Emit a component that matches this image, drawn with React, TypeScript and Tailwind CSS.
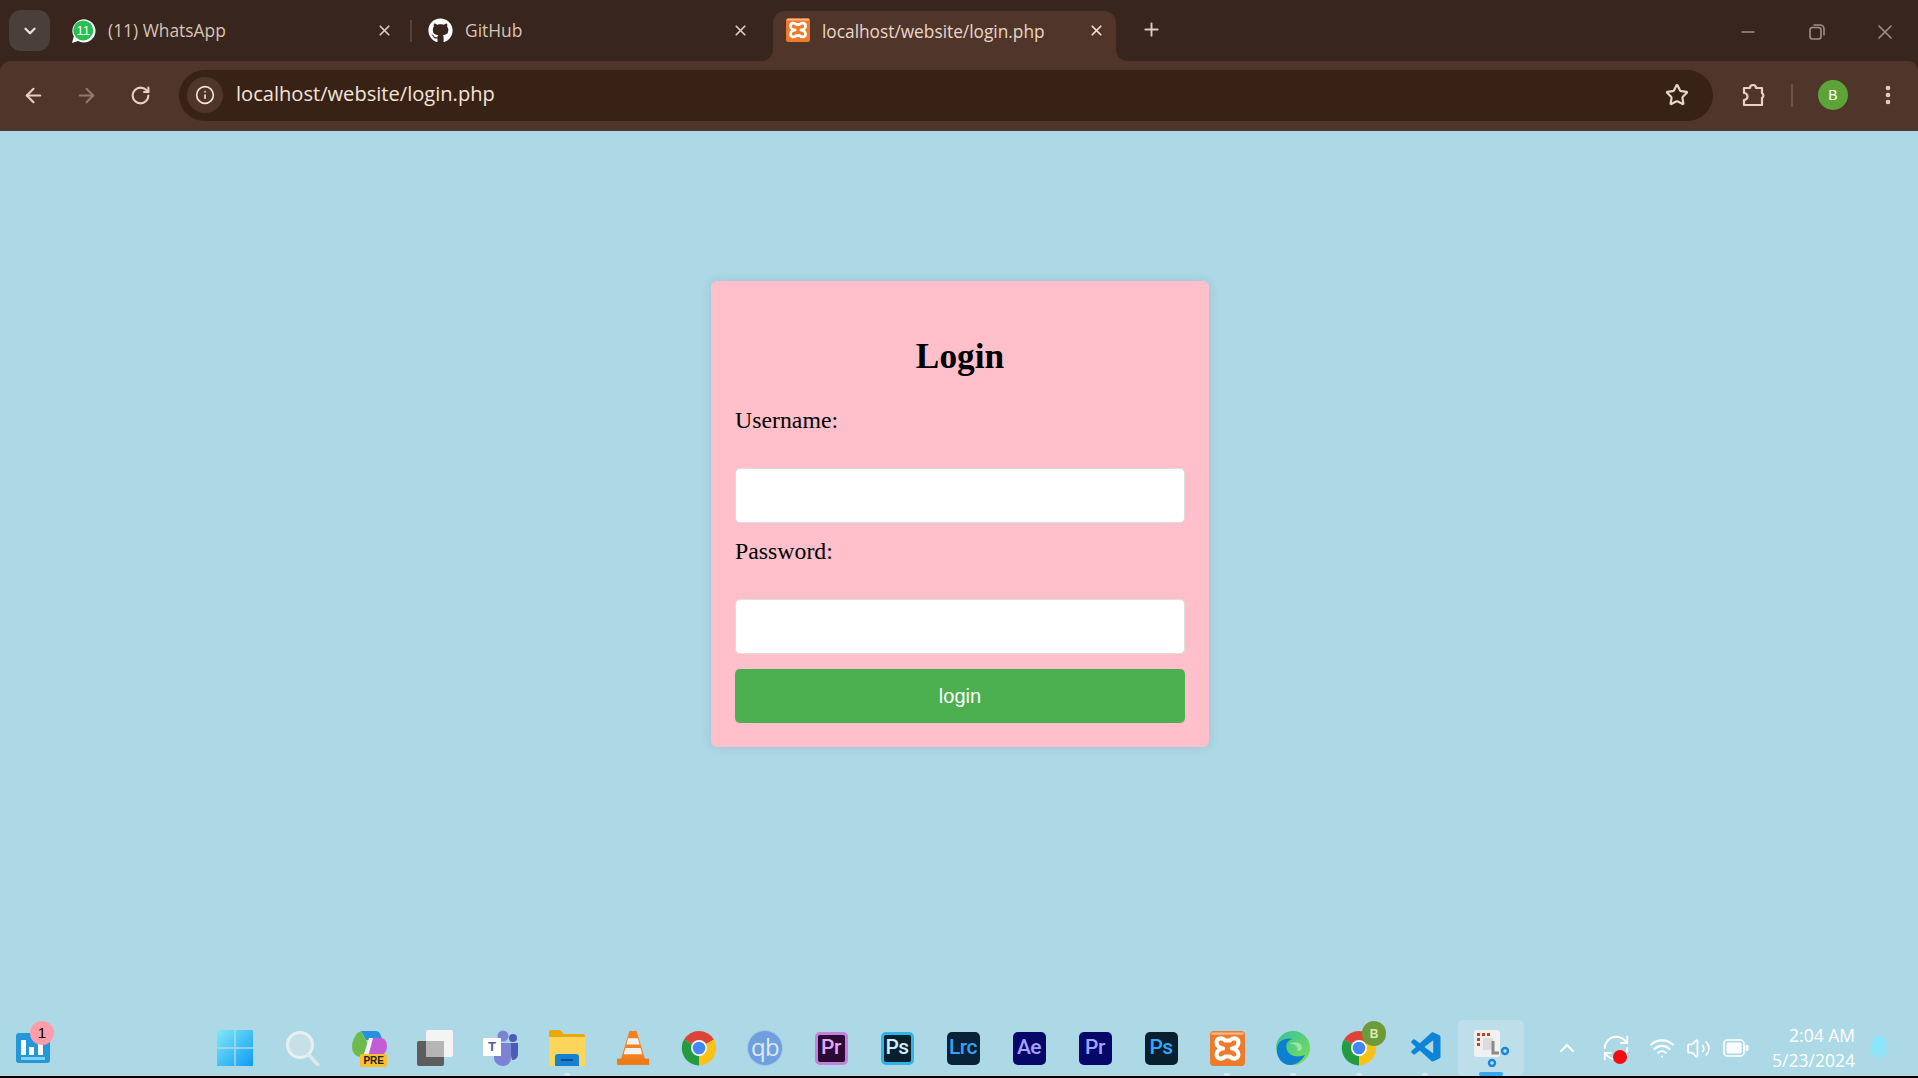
import {
  X, Plus, ArrowLeft, ArrowRight, RotateCw, RefreshCw, Info, Star, EllipsisVertical, Minus, ChevronDown, ChevronUp, Wifi, Volume2,
} from 'lucide-react'
import { FaGithub } from 'react-icons/fa'
import { VscVscode } from 'react-icons/vsc'
import type { ReactNode } from 'react'

const uiFont = 'font-["Open_Sans","Noto_Sans",sans-serif]'

function WhatsAppIcon() {
  return (
    <svg width="26" height="26" viewBox="0 0 26 26">
      <path d="M2 25l1.8-6.4A11.6 11.6 0 1 1 8 22.9z" fill="#fff" />
      <circle cx="13.2" cy="12.4" r="10" fill="#25c04f" />
      <text x="13.2" y="17" textAnchor="middle" fontSize="13" fill="#fff" fontFamily="Liberation Sans">11</text>
    </svg>
  )
}

function XamppBadge({ size }: { size: number }) {
  return (
    <svg width={size} height={size} viewBox="0 0 24 24" className="shrink-0">
      <rect width="24" height="24" rx="2.500" fill="#ee7a2c" />
      <rect x="1" y="1" width="22" height="1.500" fill="#f6b88d" />
      <path
        d="M10.500 6.500C8 4 4.500 5 4.500 8c0 2.500 2.500 4 4.500 4-2 0-4.500 1.500-4.500 4 0 3 3.500 4 6 1.500h3c2.500 2.500 6 1.500 6-1.500 0-2.500-2.500-4-4.500-4 2 0 4.500-1.500 4.500-4 0-3-3.500-4-6-1.500z"
        fill="none"
        stroke="#fff"
        strokeWidth="2.800"
        strokeLinejoin="round"
      />
    </svg>
  )
}

function Tab({ title, icon, width, pad, gap, closeGap, sep }: { title: string; icon: ReactNode; width: string; pad: string; gap: string; closeGap: string; sep?: boolean }) {
  return (
    <div className={`flex h-[41px] shrink-0 items-center text-[17.4px] text-[#d9c3b5] ${width} ${pad}`}>
      <div className="flex w-[26px] justify-center">{icon}</div>
      <span className={gap}>{title}</span>
      <X size={17} strokeWidth={2.4} className={`ml-auto text-[#e0cabc] ${closeGap}`} />
      {sep && <div className="h-[22px] w-[2px] bg-[#56423a]" />}
    </div>
  )
}

function TabStrip() {
  return (
    <div className="flex h-[61px] items-start pl-[9px] pt-[10px]">
      <div className="flex h-[41px] w-[41px] items-center justify-center rounded-[12px] bg-[#4b3f3b]">
        <ChevronDown size={18} strokeWidth={3} className="text-[#f0e0d6]" />
      </div>
      <div className="ml-[13px] flex">
        <Tab title="(11) WhatsApp" icon={<WhatsAppIcon />} width="w-[349px]" pad="pl-[7px]" gap="ml-[12px]" closeGap="mr-[17px]" sep />
        <Tab title="GitHub" icon={<FaGithub size={25} className="text-white" />} width="w-[361px]" pad="pl-[15px]" gap="ml-[12px]" closeGap="mr-[24px]" />
      </div>
      <div className="relative z-10 mt-[1px] flex h-[50px] w-[343px] items-start rounded-t-[12px] bg-[#50362a] pl-[13px] pt-[7px] text-[17.3px] text-[#ead6c9]">
        <svg width="12" height="12" viewBox="0 0 12 12" className="absolute bottom-0 left-[-12px]">
          <path d="M12 0v12H0c7 0 12-5 12-12z" fill="#50362a" />
        </svg>
        <svg width="12" height="12" viewBox="0 0 12 12" className="absolute bottom-0 right-[-12px]">
          <path d="M0 0v12h12C5 12 0 7 0 0z" fill="#50362a" />
        </svg>
        <XamppBadge size={24} />
        <span className="ml-[12px] mt-[1px]">localhost/website/login.php</span>
        <X size={17} strokeWidth={2.4} className="ml-auto mr-[11px] mt-[4px] text-[#f0dfd4]" />
      </div>
      <Plus size={21} strokeWidth={2.2} className="ml-[25px] mt-[9px] text-[#e0cabc]" />
      <div className="ml-auto flex items-center pt-[10px] text-[#a09087]">
        <Minus size={20} />
        <svg width="18" height="18" viewBox="0 0 18 18" className="ml-[50px]" fill="none" stroke="currentColor" strokeWidth="1.6">
          <rect x="2" y="4.5" width="11" height="11.5" rx="2.5" />
          <path d="M5.5 2h6.5a4 4 0 0 1 4 4v6.5" />
        </svg>
        <X size={24} strokeWidth={1.6} className="ml-[47px] mr-[21px]" />
      </div>
    </div>
  )
}

function Toolbar() {
  return (
    <div className="flex h-[70px] items-center rounded-t-[10px] border-b-2 border-[#463a33] bg-[#50362a] pl-[22px]">
      <ArrowLeft size={23} strokeWidth={2.2} className="text-[#e8cfc0]" />
      <ArrowRight size={23} strokeWidth={2.2} className="ml-[30px] text-[#907a6d]" />
      <RotateCw size={21} strokeWidth={2.4} className="ml-[32px] text-[#e8cfc0]" />
      <div className="ml-[28px] flex h-[51px] w-[1534px] items-center rounded-full bg-[#382215] pl-[8px]">
        <div className="flex h-[36px] w-[36px] items-center justify-center rounded-full bg-[#50362a]">
          <Info size={20} strokeWidth={2} className="text-[#f2e2d8]" />
        </div>
        <span className="mb-[2px] ml-[13px] text-[20.1px] text-[#f4e4da]">localhost/website/login.php</span>
        <Star size={24} strokeWidth={2.2} className="ml-auto mr-[24px] text-[#e8d5c9]" />
      </div>
      <svg width="26" height="26" viewBox="0 0 26 26" className="ml-[27px]" fill="none" stroke="#ecd1c0" strokeWidth="2.2" strokeLinejoin="round">
        <path d="M4 6h6a3 3 0 0 1 6 0h6v5a3 3 0 0 1 0 5v7H4v-5a3 3 0 0 0 0-7z" />
      </svg>
      <div className="ml-[25px] h-[23px] w-[2px] bg-[#6d5346]" />
      <div className="ml-[25px] flex h-[30px] w-[30px] items-center justify-center rounded-full bg-[#5da438] font-['Liberation_Sans',sans-serif] text-[14px] text-white">
        B
      </div>
      <EllipsisVertical size={24} strokeWidth={2.6} className="ml-[28px] text-[#ecd1c0]" />
    </div>
  )
}

function LoginCard() {
  return (
    <form className="ml-[2px] mt-[150px] h-[466px] w-[498px] rounded-[6px] bg-[#ffc0cb] px-[24px] pt-[56px] font-['Liberation_Serif',serif] text-black shadow-[0_0_12px_rgba(0,0,0,0.1)]">
      <h2 className="text-center text-[35.3px] font-bold leading-[40px]">Login</h2>
      <label className="mt-[29px] block text-[23.8px] leading-[28px]">Username:</label>
      <input type="text" className="mb-[14px] mt-[34px] block h-[55px] w-full rounded-[5px] border border-[#ddd] bg-white" />
      <label className="block text-[23.8px] leading-[28px]">Password:</label>
      <input type="password" className="mt-[34px] block h-[55px] w-full rounded-[5px] border border-[#ddd] bg-white" />
      <button type="button" className="mt-[15px] h-[54px] w-full rounded-[5px] bg-[#4caf50] font-['Liberation_Sans',sans-serif] text-[20px] text-white">
        login
      </button>
    </form>
  )
}

function AdobeIcon({ label, bg, fg, border }: { label: string; bg: string; fg: string; border?: string }) {
  return (
    <div
      className={`flex h-[33px] w-[33px] items-center justify-center rounded-[5px] font-['Roboto',sans-serif] text-[21px] font-medium tracking-tight ${border ? 'border-[3px]' : ''}`}
      style={{ background: bg, color: fg, borderColor: border }}
    >
      {label}
    </div>
  )
}

function ChromeIcon() {
  return (
    <svg width="36" height="36" viewBox="0 0 36 36">
      <path d="M18 18 3 9.5A17.5 17.5 0 0 1 33 9.5z" fill="#dd4437" />
      <path d="M18 18 33 9.5A17.5 17.5 0 0 1 18 35.500z" fill="#fbc116" />
      <path d="M18 18 18 35.500A17.500 17.500 0 0 1 3 9.500z" fill="#249a41" />
      <circle cx="18" cy="18" r="8" fill="#fff" />
      <circle cx="18" cy="18" r="6.300" fill="#4287f5" />
    </svg>
  )
}

function EdgeIcon() {
  return (
    <svg width="36" height="36" viewBox="0 0 36 36">
      <defs>
        <linearGradient id="edge-a" x1="0" y1="0" x2="1" y2="1">
          <stop offset="0" stopColor="#35c1a0" />
          <stop offset="1" stopColor="#7ee04f" />
        </linearGradient>
      </defs>
      <circle cx="18" cy="18" r="17" fill="url(#edge-a)" />
      <path d="M2 20C2 10 11 7 18 9c-6 1-8 6-6 11 2 6 10 8 18 5-4 7-10 10-15 10C7 35 2 28 2 20z" fill="#0c7fd0" />
      <path d="M14 14c5-3 13-2 13 4 0 2-2 3-5 3 3-4-4-8-8-7z" fill="#b3ecc7" opacity="0.7" />
    </svg>
  )
}

function SnipIcon() {
  return (
    <svg width="36" height="38" viewBox="0 0 36 38">
      <rect x="1" y="1" width="26" height="27" rx="3" fill="#f1f1f1" />
      <path d="M4 4h3v3H4zM9 4h3v3H9zM14 4h3v3h-3zM4 9h3v3H4zM4 14h3v3H4z" fill="#c8401f" />
      <path d="M10 9h10v12H10z" fill="#dcdcdc" />
      <path d="M20 12v12l6 0" fill="none" stroke="#8a8a8a" strokeWidth="3" />
      <circle cx="32" cy="22" r="3" fill="none" stroke="#1a86d8" strokeWidth="2.400" />
      <circle cx="19" cy="34" r="3" fill="none" stroke="#1a86d8" strokeWidth="2.400" />
    </svg>
  )
}

const taskbarApps: ReactNode[] = [
  <svg key="start" width="36" height="36" viewBox="0 0 36 36" className="-ml-[4px]">
    <defs>
      <linearGradient id="win" x1="0" y1="0" x2="1" y2="1">
        <stop offset="0" stopColor="#7fe9f7" />
        <stop offset="1" stopColor="#0f9bf5" />
      </linearGradient>
    </defs>
    <path d="M0 0h17.300v17.300H0zM18.700 0H36v17.300H18.700zM0 18.700h17.300V36H0zM18.700 18.700H36V36H18.700z" fill="url(#win)" />
  </svg>,
  <svg key="search" width="36" height="36" viewBox="0 0 36 36" fill="none">
    <circle cx="15" cy="15" r="12.500" fill="#c6e0e8" stroke="#e9eff0" strokeWidth="3" />
    <path d="M24 25l9 10" stroke="#dfe8ea" strokeWidth="3.500" strokeLinecap="round" />
  </svg>,
  <div key="copilot" className="relative h-[38px] w-[36px]">
    <svg width="36" height="32" viewBox="0 0 36 32">
      <path d="M10 2h15c3 0 5 3 6 9H15z" fill="#2a8fe0" />
      <path d="M10 2c-5 2-9 9-9 16 0 6 4 10 10 10h6l2-8 -4-9z" fill="#6dba4d" />
      <path d="M21 9h10c3 1 5 4 5 8 0 6-4 11-11 11h-9z" fill="#c45cd6" />
      <path d="M18 9h4l-5 19h-5z" fill="#f1f4f5" />
    </svg>
    <div className="absolute bottom-0 right-0 rounded-[2px] bg-[#fbc02d] px-[3px] font-['Liberation_Sans',sans-serif] text-[10px] font-bold leading-[13px] text-[#222]">
      PRE
    </div>
  </div>,
  <svg key="view" width="36" height="36" viewBox="0 0 36 36">
    <rect x="9" y="0" width="27" height="27" rx="2" fill="#f4f4f4" />
    <rect x="0" y="11" width="27" height="25" rx="2" fill="#5d5d5d" />
    <rect x="9" y="11" width="18" height="16" fill="#b5b5b5" />
  </svg>,
  <div key="teams" className="relative h-[36px] w-[36px]">
    <svg width="36" height="36" viewBox="0 0 36 36">
      <circle cx="20" cy="6" r="5.500" fill="#7b83d3" />
      <circle cx="30" cy="8" r="4" fill="#4e5ab5" />
      <path d="M25 13h10v11c0 4-3 6-6 6z" fill="#4e5ab5" />
      <path d="M11 13h17v15c0 5-4 8-8 8s-9-3-9-8z" fill="#7b83d3" />
    </svg>
    <div className="absolute left-0 top-[8px] flex h-[18px] w-[18px] items-center justify-center bg-white font-['Liberation_Sans',sans-serif] text-[13px] font-bold text-[#4e5ab5]">
      T
    </div>
  </div>,
  <svg key="files" width="36" height="38" viewBox="0 0 36 38">
    <path d="M0 3a2 2 0 0 1 2-2h9l4 4h19a2 2 0 0 1 2 2v6H0z" fill="#e8a90f" />
    <path d="M0 8h36v29H0z" fill="#fcd65b" />
    <path d="M6 37V28a3 3 0 0 1 3-3h18a3 3 0 0 1 3 3v9z" fill="#1681d2" />
    <path d="M12 31h12" stroke="#0a4d8a" strokeWidth="2" />
  </svg>,
  <svg key="vlc" width="32" height="36" viewBox="0 0 36 38">
    <path d="M14 0h8l10 33H4z" fill="#f47f1f" />
    <path d="M12.500 8h11l2 7h-15zM9.500 19h17l2 7h-21z" fill="#f2f2f2" />
    <path d="M0 31h36v7H0z" fill="#ee7a15" />
  </svg>,
  <ChromeIcon key="chrome" />,
  <div key="qb" className="flex h-[36px] w-[36px] items-center justify-center rounded-full border border-[#a9c6ea] bg-[#6f9fdc] pb-[3px] font-['Open_Sans',sans-serif] text-[24px] leading-none tracking-tight text-[#dcebf8]">
    qb
  </div>,
  <AdobeIcon key="pr1" label="Pr" bg="#2d0a33" fg="#e4a6f5" border="#c77fdc" />,
  <AdobeIcon key="ps1" label="Ps" bg="#08202e" fg="#cfeefc" border="#30b4e6" />,
  <AdobeIcon key="lrc" label="Lrc" bg="#0a2238" fg="#3aa0f0" />,
  <AdobeIcon key="ae" label="Ae" bg="#07076a" fg="#a2a2fb" />,
  <AdobeIcon key="pr2" label="Pr" bg="#07076a" fg="#a2a2fb" />,
  <AdobeIcon key="ps2" label="Ps" bg="#08202e" fg="#31a8ff" />,
  <XamppBadge key="xampp" size={35} />,
  <EdgeIcon key="edge" />,
  <div key="chrome2" className="relative">
    <ChromeIcon />
    <div className="absolute right-[-9px] top-[-9px] flex h-[25px] w-[24px] items-center justify-center rounded-full bg-[#6e9b3a] font-['Liberation_Sans',sans-serif] text-[12px] font-bold text-[#dcecb8]">
      B
    </div>
  </div>,
  <VscVscode key="code" size={36} className="ml-[3px] text-[#0d84d8]" />,
  <SnipIcon key="snip" />,
]

const underlined = new Set(['files', 'xampp', 'edge', 'chrome2', 'code'])

function Taskbar() {
  return (
    <div className="flex h-[68px] shrink-0 items-center border-b-2 border-black pl-[16px] pt-[10px]">
      <div className="relative h-[30px] w-[34px] rounded-[3px] bg-[#2596d8]">
        <div className="absolute bottom-[8px] left-[5px] h-[15px] w-[5px] bg-white" />
        <div className="absolute bottom-[8px] left-[13px] h-[8px] w-[5px] bg-white" />
        <div className="absolute bottom-[8px] left-[22px] h-[11px] w-[5px] bg-white" />
        <div className="absolute bottom-[3px] left-[5px] h-[3px] w-[24px] bg-[#7cd4f5]" />
        <div className="absolute right-[-4px] top-[-12px] flex h-[24px] w-[24px] items-center justify-center rounded-full bg-[#ff9ea8] font-['Liberation_Sans',sans-serif] text-[15px] text-black">
          1
        </div>
      </div>
      <div className="ml-[154px] flex">
        {taskbarApps.map((icon, i) => {
          const key = (icon as { key?: string }).key ?? String(i)
          const active = key === 'snip'
          return (
            <div key={key} className={`relative flex h-[56px] w-[66px] items-center justify-center ${active ? 'rounded-[5px] bg-[#bcdfe9]' : ''}`}>
              {icon}
              {underlined.has(key) && <div className="absolute bottom-[0px] h-[3px] w-[6px] rounded-full bg-[#d9e7ec]" />}
              {active && <div className="absolute bottom-[0px] h-[4px] w-[24px] rounded-full bg-[#3aa6ec]" />}
            </div>
          )
        })}
      </div>
      <ChevronUp size={24} strokeWidth={2.2} className="ml-[31px] text-white" />
      <div className="relative ml-[22px] h-[30px] w-[30px]">
        <RefreshCw size={30} strokeWidth={1.5} className="text-white" />
        <div className="absolute bottom-[-1px] right-[4px] h-[14px] w-[14px] rounded-full bg-[#f20d12]" />
      </div>
      <Wifi size={26} strokeWidth={2} className="ml-[18px] text-white" />
      <Volume2 size={25} strokeWidth={1.6} className="ml-[11px] text-white" />
      <svg width="26" height="18" viewBox="0 0 26 18" className="ml-[12px]" fill="none">
        <rect x="1" y="1" width="20" height="16" rx="3.500" stroke="#fff" strokeWidth="1.600" />
        <rect x="3.500" y="3.500" width="15" height="11" rx="1.500" fill="#fff" />
        <rect x="22.500" y="6" width="3" height="6" rx="1" fill="#fff" />
      </svg>
      <div className="ml-[10px] w-[96px] text-right text-[17.5px] leading-[25px] text-white">
        <div>2:04 AM</div>
        <div>5/23/2024</div>
      </div>
      <svg width="20" height="26" viewBox="0 0 20 26" className="ml-[14px]">
        <path d="M10 1c5 0 7 4 7 9v7l3 3H0l3-3v-7c0-5 2-9 7-9z" fill="#8be6fb" />
        <path d="M7 22h6v2H7z" fill="#8be6fb" />
      </svg>
    </div>
  )
}

export default function App() {
  return (
    <div className={`flex h-screen flex-col overflow-hidden bg-[#add8e6] ${uiFont}`}>
      <div className="bg-[#38251d]">
        <TabStrip />
        <Toolbar />
      </div>
      <main className="flex flex-1 items-start justify-center">
        <LoginCard />
      </main>
      <Taskbar />
    </div>
  )
}
